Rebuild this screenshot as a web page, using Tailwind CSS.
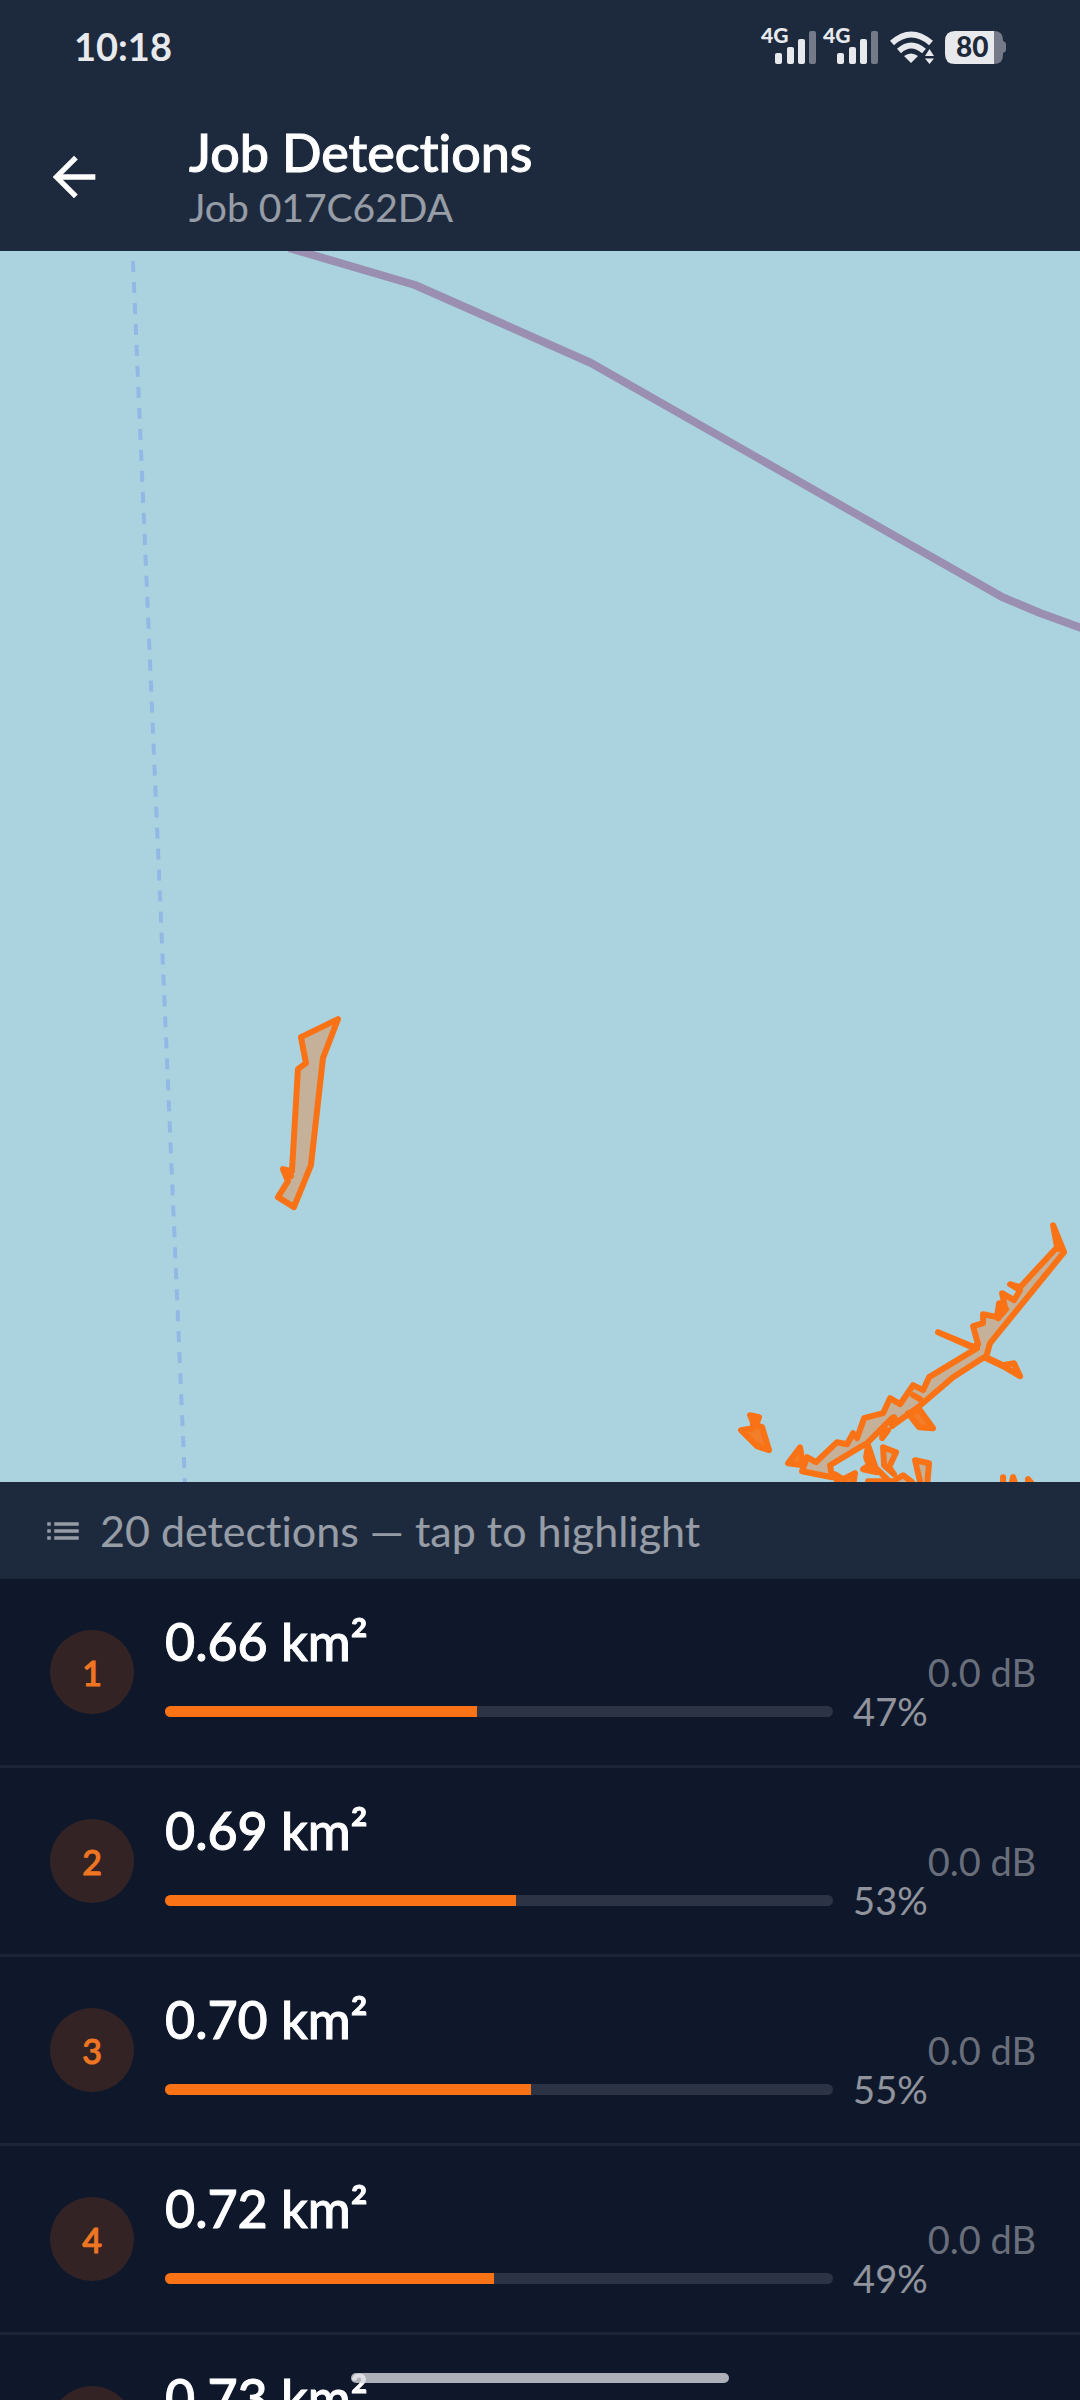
<!DOCTYPE html>
<html lang="en">
<head>
    <meta charset="UTF-8">
    <meta name="viewport" content="width=device-width, initial-scale=1.0">
    <title>Job Detections</title>
    <script src="https://cdn.jsdelivr.net/npm/@tailwindcss/browser@4"></script>
</head>
<body class="h-screen flex flex-col overflow-hidden bg-slate-900 text-white font-['Lato','Open_Sans',sans-serif] [font-variant-ligatures:none]">
    <header class="shrink-0 bg-slate-800">
        <!-- Status bar -->
        <div class="h-[103px] pb-3 pl-[74px] pr-[73px] flex items-center justify-between text-[#e7e9ed]">
            <time class="text-[38px] leading-none font-bold">10:18</time>
            <div class="flex items-center gap-[11px]">
                <div class="flex gap-[6px]">
                    <svg class="w-14 h-9 overflow-visible" viewBox="0 0 56 36" fill="currentColor">
                        <text x="0" y="15" font-size="21" font-weight="900">4G</text>
                        <rect x="14" y="25" width="7" height="11" rx="2"/>
                        <rect x="26" y="19" width="7" height="17" rx="2"/>
                        <rect x="37" y="11" width="7" height="25" rx="2"/>
                        <rect x="48" y="3" width="7" height="33" rx="2" fill="#747a87"/>
                    </svg>
                    <svg class="w-14 h-9 overflow-visible" viewBox="0 0 56 36" fill="currentColor">
                        <text x="0" y="15" font-size="21" font-weight="900">4G</text>
                        <rect x="14" y="25" width="7" height="11" rx="2"/>
                        <rect x="26" y="19" width="7" height="17" rx="2"/>
                        <rect x="37" y="11" width="7" height="25" rx="2"/>
                        <rect x="48" y="3" width="7" height="33" rx="2" fill="#747a87"/>
                    </svg>
                </div>
                <svg class="w-11 h-9" viewBox="0 0 44 36" fill="none" stroke="currentColor" stroke-width="6">
                    <path d="M2 15Q21 -2 41 15"/>
                    <path d="M9 23Q21 12 34 23"/>
                    <path d="M14 28Q21 23 28 28L21 35Z" fill="currentColor" stroke="none"/>
                    <path d="M35 28L39.500 21L44 28ZM35 30.500H44L39.500 36Z" fill="currentColor" stroke="none"/>
                </svg>
                <svg class="w-[62px] h-9" viewBox="0 0 62 36">
                    <path d="M48 3H49Q58 3 58 12V13Q61 14 61 16V22Q61 24 58 25V27Q58 36 49 36H48Z" fill="#747a87"/>
                    <path d="M10 3H49V36H10Q0 36 0 26V13Q0 3 10 3Z" fill="currentColor"/>
                    <text x="11" y="29" font-size="28" font-weight="900" fill="#1e293b">80</text>
                </svg>
            </div>
        </div>
        <!-- App bar -->
        <div class="h-[148px] pl-[42px] flex items-center gap-[83px]">
            <button type="button" aria-label="Back" class="size-16">
                <svg class="size-16" viewBox="0 0 24 24" fill="currentColor">
                    <path d="M20 11H7.830l5.590-5.590L12 4l-8 8 8 8 1.410-1.410L7.830 13H20v-2z"/>
                </svg>
            </button>
            <div>
                <h1 class="text-[52px] leading-[60px] font-medium [-webkit-text-stroke:1px]">Job Detections</h1>
                <p class="text-[39px] leading-[50px] text-white/54">Job 017C62DA</p>
            </div>
        </div>
    </header>

    <!-- Map -->
    <main class="flex-[3] min-h-0 bg-[#aad3df]">
        <svg class="block w-full h-full" viewBox="0 251 1080 1231" preserveAspectRatio="xMidYMid slice" fill="none">
            <path d="M133 261L185 1482" stroke="#92b8e6" stroke-width="4" stroke-dasharray="11 10"/>
            <path d="M289 248L415 285L501 323L591 363L1002 597L1040 613L1084 629" stroke="#9a8fb0" stroke-width="8" stroke-linejoin="round"/>
            <g stroke="#f97316" stroke-width="6" stroke-linejoin="round" stroke-linecap="round" fill="#f97316" fill-opacity=".35">
                <path d="M338 1019L301 1037L306 1063L298 1069L292 1171L283 1169L288 1181L278 1197L294 1207L311 1165L323 1058Z"/>
                <path d="M1053 1225L1064 1252L990 1343L986 1357L1003 1365L1014 1363L1020 1376L1003 1366L984 1357L953 1377L918 1407L897 1422L892 1418L880 1430L867 1443L860 1447L830 1465L832 1477L802 1471L807 1457L816 1462L837 1442L847 1444L853 1433L857 1438L864 1418L883 1413L890 1398L900 1404L913 1385L923 1390L929 1377L977 1348L938 1332L972 1347L978 1344L973 1326L983 1323L983 1314L997 1317L999 1303L1005 1308L1002 1293L1014 1300L1020 1290L1010 1284L1020 1287L1057 1247Z"/>
                <path d="M913 1395L920 1399M1056 1236L1059 1249M286 1172L291 1176"/>
                <path d="M997 1315L1000 1305L1006 1309L998 1318Z" fill-opacity="1"/>
                <path d="M750 1415L759 1417L756 1425L762 1427L769 1450L757 1446L741 1430L753 1428L753 1422Z" fill-opacity=".9"/>
                <path d="M800 1447L788 1463L803 1465ZM920 1410L933 1428L919 1427L908 1413Z" fill-opacity=".9"/>
                <path d="M883 1430L888 1430L882 1438ZM894 1417L897 1422L892 1426ZM868 1445L877 1472L863 1469L869 1465L866 1457Z" fill-opacity=".9"/>
                <path d="M883 1447L896 1452L889 1467L894 1474L884 1465Z"/>
                <path d="M877 1469L890 1482M868 1481L893 1481L903 1475L912 1482"/>
                <path d="M915 1460L929 1463L927 1486L921 1486Z"/>
                <path d="M835 1474L843 1479L855 1473L853 1486L838 1486Z" fill-opacity=".9"/>
                <path d="M1003 1477V1486M1013 1477L1011 1486M1013 1477L1016 1486M1028 1479V1486M1028 1479L1034 1486"/>
            </g>
        </svg>
    </main>

    <!-- Detections -->
    <section class="flex-[2] min-h-0 basis-[97px] flex flex-col">
        <h2 class="shrink-0 h-[97px] px-[42px] flex items-center gap-4 bg-slate-800 text-[43px] leading-[50px] text-white/54">
            <svg class="size-[42px]" viewBox="0 0 24 24" fill="currentColor">
                <path d="M3 13h2v-2H3v2zm0 4h2v-2H3v2zm0-8h2V7H3v2zm4 4h14v-2H7v2zm0 4h14v-2H7v2zM7 7v2h14V7H7z"/>
            </svg>
            20 detections — tap to highlight
        </h2>
        <ul class="flex-1 min-h-0 overflow-y-auto [scrollbar-width:none]">
            <li class="border-b-[3px] border-white/6">
                <button type="button" class="w-full h-[186px] pl-[50px] pr-[44px] flex items-center text-left">
                    <span class="shrink-0 size-[84px] mr-[31px] rounded-full bg-orange-500/15 text-[#ee7622] text-[34px] font-medium [-webkit-text-stroke:1px] flex items-center justify-center">1</span>
                    <span class="flex-1">
                        <span class="block text-[52px] leading-[60px] font-medium [-webkit-text-stroke:1px]">0.66 km²</span>
                        <span class="mt-[18px] flex items-center gap-5">
                            <span class="flex-1 h-[11px] rounded-full overflow-hidden bg-white/12"><span class="block h-full bg-[#f97316]" style="width: 46.7%"></span></span>
                            <span class="text-[38px] leading-[44px] text-white/54">47%</span>
                        </span>
                    </span>
                    <span class="text-[38px] leading-[44px] text-white/38">0.0 dB</span>
                </button>
            </li>
            <li class="border-b-[3px] border-white/6">
                <button type="button" class="w-full h-[186px] pl-[50px] pr-[44px] flex items-center text-left">
                    <span class="shrink-0 size-[84px] mr-[31px] rounded-full bg-orange-500/15 text-[#ee7622] text-[34px] font-medium [-webkit-text-stroke:1px] flex items-center justify-center">2</span>
                    <span class="flex-1">
                        <span class="block text-[52px] leading-[60px] font-medium [-webkit-text-stroke:1px]">0.69 km²</span>
                        <span class="mt-[18px] flex items-center gap-5">
                            <span class="flex-1 h-[11px] rounded-full overflow-hidden bg-white/12"><span class="block h-full bg-[#f97316]" style="width: 52.5%"></span></span>
                            <span class="text-[38px] leading-[44px] text-white/54">53%</span>
                        </span>
                    </span>
                    <span class="text-[38px] leading-[44px] text-white/38">0.0 dB</span>
                </button>
            </li>
            <li class="border-b-[3px] border-white/6">
                <button type="button" class="w-full h-[186px] pl-[50px] pr-[44px] flex items-center text-left">
                    <span class="shrink-0 size-[84px] mr-[31px] rounded-full bg-orange-500/15 text-[#ee7622] text-[34px] font-medium [-webkit-text-stroke:1px] flex items-center justify-center">3</span>
                    <span class="flex-1">
                        <span class="block text-[52px] leading-[60px] font-medium [-webkit-text-stroke:1px]">0.70 km²</span>
                        <span class="mt-[18px] flex items-center gap-5">
                            <span class="flex-1 h-[11px] rounded-full overflow-hidden bg-white/12"><span class="block h-full bg-[#f97316]" style="width: 54.8%"></span></span>
                            <span class="text-[38px] leading-[44px] text-white/54">55%</span>
                        </span>
                    </span>
                    <span class="text-[38px] leading-[44px] text-white/38">0.0 dB</span>
                </button>
            </li>
            <li class="border-b-[3px] border-white/6">
                <button type="button" class="w-full h-[186px] pl-[50px] pr-[44px] flex items-center text-left">
                    <span class="shrink-0 size-[84px] mr-[31px] rounded-full bg-orange-500/15 text-[#ee7622] text-[34px] font-medium [-webkit-text-stroke:1px] flex items-center justify-center">4</span>
                    <span class="flex-1">
                        <span class="block text-[52px] leading-[60px] font-medium [-webkit-text-stroke:1px]">0.72 km²</span>
                        <span class="mt-[18px] flex items-center gap-5">
                            <span class="flex-1 h-[11px] rounded-full overflow-hidden bg-white/12"><span class="block h-full bg-[#f97316]" style="width: 49.3%"></span></span>
                            <span class="text-[38px] leading-[44px] text-white/54">49%</span>
                        </span>
                    </span>
                    <span class="text-[38px] leading-[44px] text-white/38">0.0 dB</span>
                </button>
            </li>
            <li class="border-b-[3px] border-white/6">
                <button type="button" class="w-full h-[186px] pl-[50px] pr-[44px] flex items-center text-left">
                    <span class="shrink-0 size-[84px] mr-[31px] rounded-full bg-orange-500/15"></span>
                    <span class="flex-1">
                        <span class="block text-[52px] leading-[60px] font-medium [-webkit-text-stroke:1px]">0.73 km²</span>
                        <span class="mt-[18px] block h-[44px]"></span>
                    </span>
                </button>
            </li>
        </ul>
    </section>

    <!-- Gesture bar -->
    <div class="fixed bottom-[17px] left-1/2 -translate-x-1/2 w-[35%] h-[10px] rounded-full bg-[#d5d7dd]/80"></div>
</body>
</html>
